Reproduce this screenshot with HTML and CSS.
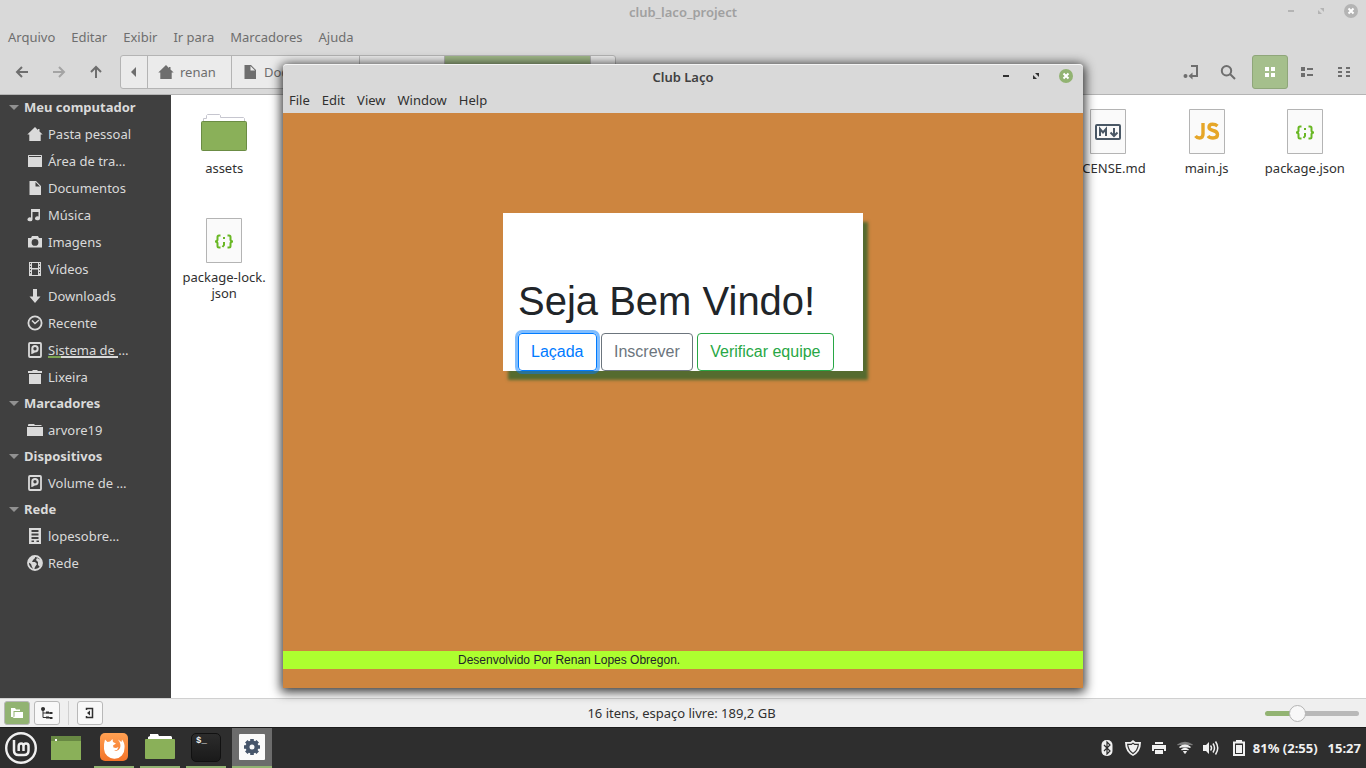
FILE: index.html
```html
<!DOCTYPE html>
<html lang="pt-BR">
<head>
<meta charset="utf-8">
<title>Club Laço</title>
<link rel="stylesheet" href="styles.css">
</head>
<body>
<svg class="sprite" aria-hidden="true">
  <symbol id="home" viewBox="0 0 16 16"><path d="M8 1 .3 8.600h2V15h11.400V8.600h2L12.500 5.500V3h-1.500v1z"/></symbol>
  <symbol id="doc" viewBox="0 0 16 16"><path fill-rule="evenodd" d="M2.500 1H9l5 5v9H2.500zM8.500 2v4.500H13z"/></symbol>
  <symbol id="desk" viewBox="0 0 16 16"><path fill-rule="evenodd" d="M1.500 2h13l.5.5V14H1V2.500zM2 3v1h12V3z"/></symbol>
  <symbol id="music" viewBox="0 0 16 16"><path d="M4 2h9v9.500a2.500 2 0 1 1-1.500-2V5h-6v7.500a2.500 2 0 1 1-1.500-2z"/></symbol>
  <symbol id="camera" viewBox="0 0 16 16"><path fill-rule="evenodd" d="M1 4h3l1-2h6l1 2h3v9.500H1zM8 5a3.400 3.400 0 1 0 0 6.800A3.400 3.400 0 0 0 8 5z"/></symbol>
  <symbol id="video" viewBox="0 0 16 16"><path fill-rule="evenodd" d="M2 1h12v14H2zM5 2v5h6V2zM5 8.500V14h6V8.500zM3 2v1.300h1V2zM3 5v1.300h1V5zM3 8v1.300h1V8zM3 11v1.300h1V11zM12 2v1.300h1V2zM12 5v1.300h1V5zM12 8v1.300h1V8zM12 11v1.300h1V11z"/></symbol>
  <symbol id="down" viewBox="0 0 16 16"><path d="M6 1h4v7.500h3.500L8 15 2.500 8.500H6z"/></symbol>
  <symbol id="clock" viewBox="0 0 16 16"><g fill="none" stroke="currentColor"><circle cx="8" cy="8" r="6.600" stroke-width="1.800"/><path d="m5 5.500 3 3 4-3.500" stroke-width="1.500"/></g></symbol>
  <symbol id="disk" viewBox="0 0 16 16"><rect x="2" y="1" width="12" height="14" rx="1" fill="none" stroke="currentColor" stroke-width="1.800"/><path fill-rule="evenodd" d="M8 3a3.700 3.700 0 1 1 0 7.400C7 10.400 6.500 12 4.300 12V6.700A3.700 3.700 0 0 1 8 3zm0 2a1.700 1.700 0 1 0 0 3.400A1.700 1.700 0 0 0 8 5z"/></symbol>
  <symbol id="trash" viewBox="0 0 16 16"><path d="M1 2h4l1-1h4l1 1h4v2H1zM2 5h12v10H2z"/></symbol>
  <symbol id="folder" viewBox="0 0 16 16"><path d="M1 2.500 2 2h5l1 1h6l1 1H1zM0 5h16v9H0z"/></symbol>
  <symbol id="server" viewBox="0 0 16 16"><path fill-rule="evenodd" d="M2 0h12v16H2zM4.500 2v2h7V2zM4.500 5.500v2h7v-2zM4.500 9v2h7V9zM4.500 12.500V14H7v-1.500zM9.500 12.500V14H12v-1.500z"/></symbol>
  <symbol id="globe" viewBox="0 0 16 16"><circle cx="8" cy="8" r="7" fill="none" stroke="currentColor" stroke-width="1.800"/><path d="M2 4c3-4 6-3 6-3v2L6 5 5 7h3l2 2-2 3-1 3-2-3-1-3-3-2zM10 3l4 2 1 4-2 3-2-2V7L9 5z"/></symbol>
  <symbol id="left" viewBox="0 0 16 16"><path d="m8 3-5 5 5 5M3 8h11" fill="none" stroke="currentColor" stroke-width="2"/></symbol>
  <symbol id="winmin" viewBox="0 0 14 14"><path d="M4 6h6v2H4z"/></symbol>
  <symbol id="winmax" viewBox="0 0 14 14"><path d="M6 4h4v4zM4 6v4h4z"/></symbol>
  <symbol id="winclose" viewBox="0 0 14 14"><circle cx="7" cy="7" r="7"/><path d="m4.500 4.500 5 5m0-5-5 5" stroke="#fff" stroke-width="2"/></symbol>
  <symbol id="page" viewBox="0 0 36 45"><path d="M.5.5h35v44H.5z" fill="#fafafa" stroke="#b4b4b4"/></symbol>
  <symbol id="braces" viewBox="0 0 36 45"><use href="#page"/><g fill="none" stroke="#68b723" stroke-width="2"><path d="M14.500 17.500H13q-1.500 0-1.500 1.500v2.500q0 2-2.500 2 2.500 0 2.500 2V28q0 1.500 1.500 1.500h1.500M21.500 17.500H23q1.500 0 1.500 1.500v2.500q0 2 2.500 2-2.500 0-2.500 2V28q0 1.500-1.500 1.500h-1.500"/><path d="M17 20h2m-1 4v3l-1.500 2"/></g></symbol>
</svg>

<div class="desktop">
  <div class="manager">
    <header class="chrome">
      <div class="titlebar">
        <span class="title">club_laco_project</span>
        <div class="winbtns">
          <button><svg><use href="#winmin"/></svg></button>
          <button><svg><use href="#winmax"/></svg></button>
          <button><svg><use href="#winclose"/></svg></button>
        </div>
      </div>
      <nav class="menu">
        <button>Arquivo</button><button>Editar</button><button>Exibir</button><button>Ir para</button><button>Marcadores</button><button>Ajuda</button>
      </nav>
      <div class="toolbar">
        <button class="tool"><svg class="i"><use href="#left"/></svg></button>
        <button class="tool faded"><svg class="i flip"><use href="#left"/></svg></button>
        <button class="tool"><svg class="i turn"><use href="#left"/></svg></button>
        <div class="path">
          <button class="crumb-arrow"><svg class="i" viewBox="0 0 16 16"><path d="M10 3v10L5 8z"/></svg></button>
          <button class="crumb-home"><svg class="i"><use href="#home"/></svg>renan</button>
          <button class="crumb-docs"><svg class="i"><use href="#doc"/></svg>Documentos</button>
          <button class="crumb-mid"></button>
          <button class="crumb-current"></button>
          <button class="crumb-end"></button>
        </div>
        <div class="views">
          <button class="tool"><svg class="i" viewBox="0 0 16 16"><circle cx="2.500" cy="12" r="2"/><path d="M8 2h6v10H9" fill="none" stroke="currentColor" stroke-width="2"/><path d="m5.500 12 4-3.500v7z"/></svg></button>
          <button class="tool"><svg class="i" viewBox="0 0 16 16"><path d="M10.500 10.500 15 15M6.500 2a4.700 4.700 0 1 0 0 9.400A4.700 4.700 0 0 0 6.500 2z" fill="none" stroke="currentColor" stroke-width="2"/></svg></button>
          <button class="tool active"><svg class="i" viewBox="0 0 16 16"><path d="M3 3h4v4H3zm6 0h4v4H9zM3 9h4v4H3zm6 0h4v4H9z"/></svg></button>
          <button class="tool"><svg class="i" viewBox="0 0 16 16"><path d="M2 3h4v4H2zm6 1h6v2H8zM2 9h4v4H2zm6 1h6v2H8z"/></svg></button>
          <button class="tool"><svg class="i" viewBox="0 0 16 16"><path d="M2 3h4v2H2zm0 4h4v2H2zm0 4h4v2H2zm8-8h4v2h-4zm0 4h4v2h-4zm0 4h4v2h-4z"/></svg></button>
        </div>
      </div>
    </header>

    <div class="content">
      <aside class="side">
        <h2>Meu computador</h2>
        <a href="#"><svg class="i"><use href="#home"/></svg>Pasta pessoal</a>
        <a href="#"><svg class="i"><use href="#desk"/></svg>Área de tra…</a>
        <a href="#"><svg class="i"><use href="#doc"/></svg>Documentos</a>
        <a href="#"><svg class="i"><use href="#music"/></svg>Música</a>
        <a href="#"><svg class="i"><use href="#camera"/></svg>Imagens</a>
        <a href="#"><svg class="i"><use href="#video"/></svg>Vídeos</a>
        <a href="#"><svg class="i"><use href="#down"/></svg>Downloads</a>
        <a href="#"><svg class="i"><use href="#clock"/></svg>Recente</a>
        <a href="#"><svg class="i"><use href="#disk"/></svg><span class="usage">Sistema de …</span></a>
        <a href="#"><svg class="i"><use href="#trash"/></svg>Lixeira</a>
        <h2>Marcadores</h2>
        <a href="#"><svg class="i"><use href="#folder"/></svg>arvore19</a>
        <h2>Dispositivos</h2>
        <a href="#"><svg class="i"><use href="#disk"/></svg>Volume de …</a>
        <h2>Rede</h2>
        <a href="#"><svg class="i"><use href="#server"/></svg>lopesobre…</a>
        <a href="#"><svg class="i"><use href="#globe"/></svg>Rede</a>
      </aside>
      <main class="files">
        <a class="file" href="#"><svg class="thumb wide" viewBox="0 0 46 45"><path d="M2.500 12V9.500h3v-3l1-1h12l1 1v2h23l1 1V12" fill="#fff" stroke="#c6c6cf"/><rect x=".5" y="12.500" width="45" height="29" rx="1" fill="#8ab059" stroke="#6b8c44"/></svg>assets</a>
        <a class="file col10" href="#"><svg class="thumb" viewBox="0 0 36 45"><use href="#page"/><rect x="6" y="16" width="24" height="14" rx="1" fill="none" stroke="#4a5866" stroke-width="2"/><path d="M10 27v-7l3 3.500 3-3.500v7M24 19v7m-3.500-2.500L24 27l3.500-3.500" fill="none" stroke="#4a5866" stroke-width="2"/></svg>LICENSE.md</a>
        <a class="file" href="#"><svg class="thumb" viewBox="0 0 36 45"><use href="#page"/><path d="M14 14v11q0 4-3.500 4-2.500 0-4-2M28.500 17q-2-1.700-5-1.700-3.500 0-3.500 3 0 2.300 4 3.200 4.500 1 4.500 4 0 3.500-4.500 3.500-3.500 0-5-2" fill="none" stroke="#e6a628" stroke-width="3.400"/></svg>main.js</a>
        <a class="file" href="#"><svg class="thumb"><use href="#braces"/></svg>package.json</a>
        <a class="file" href="#"><svg class="thumb"><use href="#braces"/></svg>package-lock.<br>json</a>
      </main>
    </div>

    <footer class="status">
      <div class="toggles">
        <button class="on"><svg class="i" viewBox="0 0 16 16"><path d="M2 3h4l1 1.500h4V6H4.500v6H2z"/><path d="M5.500 7H14v6H3.500l2-1.500z"/></svg></button>
        <button><svg class="i" viewBox="0 0 16 16"><path d="M4 4v8.500h8M4 8h8M3 4h3" fill="none" stroke="currentColor"/><circle cx="4" cy="4" r="2"/><path d="M7 6.500h3v2H7zm0 5h3v2H7zM10.500 7h3v2h-3zm0 5h3v2h-3z"/></svg></button>
        <span class="sep"></span>
        <button><svg class="i" viewBox="0 0 16 16"><path d="M4.500 5V3.500h6v9h-6V11" fill="none" stroke="currentColor" stroke-width="1.500"/><path d="M8 5.500 5 8l3 2.500z"/></svg></button>
      </div>
      <span>16 itens, espaço livre: 189,2 GB</span>
      <input class="zoom" type="range" min="0" max="100" value="31">
    </footer>
  </div>

  <section class="app">
    <div class="titlebar">
      <span class="title">Club Laço</span>
      <div class="winbtns">
        <button><svg><use href="#winmin"/></svg></button>
        <button><svg><use href="#winmax"/></svg></button>
        <button class="close"><svg><use href="#winclose"/></svg></button>
      </div>
    </div>
    <nav class="menu">
      <button>File</button><button>Edit</button><button>View</button><button>Window</button><button>Help</button>
    </nav>
    <div class="page">
      <div class="card">
        <h1>Seja Bem Vindo!</h1>
        <div class="actions">
          <button class="btn primary">Laçada</button>
          <button class="btn secondary">Inscrever</button>
          <button class="btn success">Verificar equipe</button>
        </div>
      </div>
      <footer class="credit">Desenvolvido Por Renan Lopes Obregon.</footer>
    </div>
  </section>

  <footer class="panel">
    <button class="launch"><svg width="32" height="32" viewBox="0 0 32 32"><circle cx="16" cy="16" r="14.800" fill="none" stroke="#f0f0f0" stroke-width="2.400"/><path d="M9 8v10.500q0 4.500 4.500 4.500h5.500q4.500 0 4.500-4.500V14q0-2.500-2.500-2.500T18.500 14v5M18.500 14q0-2.500-2.300-2.500T13.700 14v5" fill="none" stroke="#f0f0f0" stroke-width="2.500"/></svg></button>
    <button class="launch desk"><svg width="30" height="24" viewBox="0 0 30 24"><path d="M0 0h30v24H0z" fill="#8ab059"/><path d="M0 0h30v5H0z" fill="#688843"/><path d="M4 3h2v2H4z" fill="#fff"/></svg></button>
    <div class="tasks">
      <button class="task"><svg width="28" height="28" viewBox="0 0 28 28"><defs><linearGradient id="fx" x2="0" y2="1"><stop stop-color="#ffa052"/><stop offset="1" stop-color="#f37329"/></linearGradient></defs><rect width="28" height="28" rx="5" fill="url(#fx)"/><path d="M5 6.500 7.500 9l2.500-.5L12.500 6l.5 3 3 1.500-3 2 .5 2 2.500.5 2.500-1-1.500 3-3 .5q4 1.500 6-2.500 1.500-4-2-8.500l3.500 2.500.5-2.500q3 4 2.500 8.500A10 10 0 0 1 4 16q-.5-5 1-9.500z" fill="#fff"/></svg></button>
      <button class="task"><svg width="30" height="26" viewBox="0 0 30 26"><path d="M3 6V3l2-1V0h8l1 2h12l1 1v3z" fill="#fff"/><rect y="5" width="30" height="20" rx="1" fill="#8ab059"/></svg></button>
      <button class="task"><span class="term">$_</span></button>
      <button class="task current"><svg width="26" height="26" viewBox="0 0 26 26"><rect width="26" height="26" rx="1" fill="#fafafa"/><g fill="none" stroke="#46556a"><circle cx="13" cy="13" r="4.500" stroke-width="4"/><path d="M13 5v3m0 10v3M5 13h3m10 0h3M7.300 7.300l2.200 2.200m7 7 2.200 2.200m0-11.400-2.200 2.200m-7 7-2.200 2.200" stroke-width="3.600"/></g></svg></button>
    </div>
    <div class="tray">
      <svg class="i" viewBox="0 0 16 16"><rect x="2.500" width="11" height="16" rx="5"/><path d="m5 5 6 6-3 3V2l3 3-6 6" fill="none" stroke="#2e2e2e" stroke-width="1.200"/></svg>
      <svg class="i" viewBox="0 0 16 16"><path fill-rule="evenodd" d="m8 0 2.500 2H16q0 10-8 14Q0 12 0 2h5.500zM8 2.400 6.300 3.700H2Q2.500 11 8 14.200 13.500 11 14 3.700H9.700zM8 3.800l1.400 1.100h3.300Q12 10 8 12.800 4 10 3.300 4.900h3.300z"/></svg>
      <svg class="i" viewBox="0 0 16 16"><path fill-rule="evenodd" d="M4 2h8v2H4zM1 5h14v6h-2V9H3v2H1zm3 5h8v4H4z"/></svg>
      <svg class="i" viewBox="0 0 16 16" fill="none" stroke="currentColor" stroke-width="1.500"><path d="M.5 5q7.500-5 15 0" opacity=".4"/><path d="M2.500 7.500q5.500-4.500 11 0M4.500 10q3.500-3 7 0"/><path d="M6.500 11.500h3L8 13.500z" fill="currentColor" stroke-width="1"/></svg>
      <svg class="i" viewBox="0 0 16 16"><path d="M0 5h3l3-3v12l-3-3H0z"/><path d="M7.500 5.500q2 2.500 0 5M10 3.500q3 4.500 0 9M12.500 1.500q4.500 6.500 0 13" fill="none" stroke="currentColor" stroke-width="1.500"/></svg>
      <svg class="i battery" viewBox="0 0 16 16"><path fill-rule="evenodd" d="M5 0h6v1.500h3V16H2V1.500h3zM4 3.500V14h8V3.500z"/><path d="M5 5h6v8H5z"/></svg>
      <span>81% (2:55)</span>
      <time>15:27</time>
    </div>
  </footer>
</div>
</body>
</html>
```
FILE: styles.css
```css
* { box-sizing: border-box; }
body {
  margin: 0;
  font: 13px/16px "Noto Sans", "Open Sans", sans-serif;
  color: #303030;
}
button {
  display: inline-flex;
  align-items: center;
  justify-content: center;
  margin: 0;
  padding: 0;
  border: 0;
  background: none;
  color: inherit;
  font: inherit;
}
a { color: inherit; text-decoration: none; }
h1, h2 { margin: 0; }
svg { fill: currentColor; flex: none; }
.sprite { position: absolute; width: 0; height: 0; }
.i { width: 16px; height: 16px; }
.flip { transform: scaleX(-1); }
.turn { transform: rotate(90deg); }

.desktop {
  position: relative;
  display: flex;
  flex-direction: column;
  height: 100vh;
  overflow: hidden;
}
.manager { flex: 1; min-height: 0; display: flex; flex-direction: column; }

.chrome {
  background: #d9d9d9;
  border-bottom: 1px solid #b4b4b4;
  color: #6e6e6e;
  padding-bottom: 5px;
}
.titlebar {
  display: grid;
  grid-template-columns: 1fr auto 1fr;
  align-items: center;
  height: 24px;
}
.title { grid-column: 2; font-weight: 600; color: #a0a0a0; }
.winbtns {
  display: flex;
  justify-content: flex-end;
  gap: 16px;
  padding: 0 8px 2px 0;
  color: #b4b4b4;
}
.winbtns svg { width: 14px; height: 14px; }
.menu { display: flex; gap: 16px; height: 27px; padding: 0 8px 2px; }

.toolbar { display: flex; gap: 1px; padding: 4px 4px 0; }
.tool { width: 36px; height: 34px; border-radius: 3px; }
.faded { color: #a4a4a4; }
.active { margin-left: 5px; background: #a5bf8c; border: 1px solid #8fa67a; color: #fff; }
.path {
  display: flex;
  height: 34px;
  margin-left: 5px;
  border: 1px solid #b4b4b4;
  border-radius: 3px;
  background: #ebebeb;
}
.path button { gap: 6px; border-left: 1px solid #b4b4b4; justify-content: flex-start; }
.path .crumb-arrow { width: 26px; border-left: 0; padding-left: 5px; }
.crumb-home { width: 84px; padding-left: 10px; }
.crumb-docs { width: 128px; padding-left: 10px; }
.crumb-mid { width: 85px; }
.path .crumb-current { width: 146px; background: #a0b888; }
.crumb-end { width: 25px; }
.views { display: flex; gap: 1px; margin-left: auto; }

.content { flex: 1; min-height: 0; display: flex; background: #fff; }
.side { width: 171px; flex: none; background: #404040; color: #dadada; overflow: hidden; }
.side h2 {
  display: flex;
  align-items: center;
  gap: 5px;
  height: 26px;
  padding: 0 0 2px 9px;
  font-size: 13px;
  font-weight: 700;
}
.side h2::before {
  content: "";
  border: 5px solid transparent;
  border-top-color: #919191;
  border-bottom: 0;
}
.side a { display: flex; align-items: center; gap: 5px; height: 27px; padding: 0 0 2px 27px; }
.usage {
  background: linear-gradient(90deg, #7ba352 13px, #dadada 13px) left bottom / 70px 2px no-repeat;
}

.files {
  flex: 1;
  display: grid;
  grid-template-columns: repeat(12, 1fr);
  grid-auto-rows: 109px;
  padding: 14px 12px 0 4px;
}
.file { display: flex; flex-direction: column; align-items: center; text-align: center; white-space: nowrap; }
.thumb { width: 36px; height: 45px; margin-bottom: 6px; }
.wide { width: 46px; }
.col10 { grid-column: 10; }

.status {
  display: grid;
  grid-template-columns: 1fr auto 1fr;
  align-items: center;
  height: 29px;
  padding: 0 7px 0 4px;
  border-top: 1px solid #d0d0d0;
  background: #efefef;
}
.toggles { display: flex; align-items: center; gap: 4px; }
.toggles button {
  width: 26px;
  height: 24px;
  border: 1px solid #b8b8b8;
  border-radius: 3px;
  background: #f8f8f8;
}
.toggles .on { background: #92b372; color: #fff; }
.sep { width: 1px; height: 24px; margin: 0 4px; background: #d0d0d0; }
.zoom { appearance: none; justify-self: end; width: 94px; height: 18px; margin: 0; background: none; }
.zoom::-webkit-slider-runnable-track {
  height: 5px;
  border-radius: 3px;
  background: linear-gradient(90deg, #92b372 32px, #b8b8b8 32px);
}
.zoom::-webkit-slider-thumb {
  appearance: none;
  width: 17px;
  height: 17px;
  margin-top: -6px;
  border: 1px solid #b4b4b4;
  border-radius: 50%;
  background: #f8f8f8;
}

.app {
  position: absolute;
  inset: 64px 0 80px;
  width: 800px;
  margin: 0 auto;
  display: flex;
  flex-direction: column;
  border-radius: 4px 4px 0 0;
  background: #d9d9d9;
  box-shadow: 0 2px 11px 2px rgba(0, 0, 0, .8), inset 0 1px #f4f4f4;
}
.app .titlebar { height: 26px; }
.app .title { color: #404040; }
.app .winbtns { padding-right: 10px; color: #303030; }
.app .close { color: #92b372; }
.app .menu { gap: 12px; height: 23px; padding: 0 6px 3px; }
.page {
  flex: 1;
  display: flex;
  flex-direction: column;
  align-items: center;
  padding: 100px 0 19px;
  background: #cd853f;
  color: #212529;
  font-family: "Liberation Sans", Arial, sans-serif;
}
.card {
  width: 360px;
  padding: 64px 15px 0;
  background: #fff;
  box-shadow: 5px 9px 3px #556b2f;
}
.card h1 { margin-bottom: 8px; font-size: 40px; font-weight: 400; line-height: 48px; }
.actions { font-size: 16px; line-height: 24px; white-space: nowrap; }
.btn {
  padding: 6px 12px;
  border: 1px solid;
  border-radius: 4px;
  vertical-align: top;
}
.primary { color: #007bff; box-shadow: 0 0 0 3px rgba(0, 123, 255, .5); }
.secondary { color: #6c757d; }
.success { color: #28a745; }
.credit {
  width: 100%;
  margin-top: auto;
  padding-left: 175px;
  background: #adff2f;
  font-size: 12px;
  line-height: 18px;
}

.panel {
  display: flex;
  align-items: center;
  height: 41px;
  padding: 0 5px;
  border-top: 1px solid #1c1c1c;
  background: #2e2e2e;
  color: #f0f0f0;
}
.desk { margin: 0 13px 0 14px; }
.tasks { display: flex; gap: 6px; align-self: stretch; }
.task { width: 40px; border-bottom: 2px solid #92b372; }
.current { background: #6c6c6c; }
.term {
  width: 30px;
  height: 29px;
  padding-left: 4px;
  border: 1px solid #111;
  border-radius: 5px;
  background: linear-gradient(#2c2c2c, #1a1a1a);
  font: 700 9px/14px "Liberation Mono", monospace;
  text-align: left;
}
.tray {
  display: flex;
  align-items: center;
  gap: 10px;
  margin-left: auto;
  font-weight: 700;
}
.battery { margin: 0 -4px 0 2px; }
```
